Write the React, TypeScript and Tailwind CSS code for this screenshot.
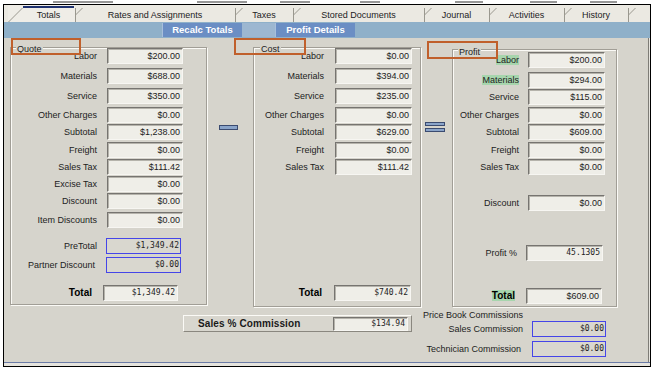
import React from "react";

type Kind = "n" | "m" | "b";
type Row = {
  label: string;
  value: string;
  mt: string;
  kind?: Kind;
  bold?: boolean;
  hl?: boolean;
  f?: string;
  lp?: string;
};

const quoteRows: Row[] = [
  { label: "Labor", value: "$200.00", mt: "mt-0" },
  { label: "Materials", value: "$688.00", mt: "mt-[4px]" },
  { label: "Service", value: "$350.00", mt: "mt-[4px]" },
  { label: "Other Charges", value: "$0.00", mt: "mt-[3px]" },
  { label: "Subtotal", value: "$1,238.00", mt: "mt-[1px]" },
  { label: "Freight", value: "$0.00", mt: "mt-[2px]" },
  { label: "Sales Tax", value: "$111.42", mt: "mt-[1px]" },
  { label: "Excise Tax", value: "$0.00", mt: "mt-[1px]" },
  { label: "Discount", value: "$0.00", mt: "mt-[1px]" },
  { label: "Item Discounts", value: "$0.00", mt: "mt-[3px]" },
  { label: "PreTotal", value: "$1,349.42", mt: "mt-[10px]", kind: "b", f: "ml-[9px] w-[75px]" },
  { label: "Partner Discount", value: "$0.00", mt: "mt-[3px]", kind: "b", f: "ml-[9px] w-[75px]", lp: "pr-[2px]" },
  { label: "Total", value: "$1,349.42", mt: "mt-[12px]", kind: "m", bold: true, f: "ml-[6px] w-[75px]", lp: "pr-[5px]" },
];

const costRows: Row[] = [
  { label: "Labor", value: "$0.00", mt: "mt-0" },
  { label: "Materials", value: "$394.00", mt: "mt-[4px]" },
  { label: "Service", value: "$235.00", mt: "mt-[4px]" },
  { label: "Other Charges", value: "$0.00", mt: "mt-[3px]" },
  { label: "Subtotal", value: "$629.00", mt: "mt-[1px]" },
  { label: "Freight", value: "$0.00", mt: "mt-[2px]" },
  { label: "Sales Tax", value: "$111.42", mt: "mt-[1px]" },
  { label: "Total", value: "$740.42", mt: "mt-[110px]", kind: "m", bold: true, f: "ml-[10px] w-[77px]", lp: "pr-[2px]" },
];

const profitRows: Row[] = [
  { label: "Labor", value: "$200.00", mt: "mt-[2px]", hl: true },
  { label: "Materials", value: "$294.00", mt: "mt-[4px]", hl: true },
  { label: "Service", value: "$115.00", mt: "mt-[1px]" },
  { label: "Other Charges", value: "$0.00", mt: "mt-[2px]" },
  { label: "Subtotal", value: "$609.00", mt: "mt-[1px]" },
  { label: "Freight", value: "$0.00", mt: "mt-[2px]" },
  { label: "Sales Tax", value: "$0.00", mt: "mt-[1px]" },
  { label: "Discount", value: "$0.00", mt: "mt-[20px]" },
  { label: "Profit %", value: "45.1305", mt: "mt-[34px]", kind: "m", f: "ml-[7px] w-[77px]", lp: "pr-[2px]" },
  { label: "Total", value: "$609.00", mt: "mt-[27px]", bold: true, hl: true, f: "ml-[7px] w-[76px]", lp: "pr-[4px]" },
];

const sunken =
  "border border-t-[#767470] border-l-[#767470] border-r-[#f7f6f2] border-b-[#f7f6f2] shadow-[inset_1px_1px_0_#b5b3ab] bg-[#efeee8]";

function Field({ value, kind = "n", cls = "ml-[10px] w-[76px]" }: { value: string; kind?: Kind; cls?: string }) {
  if (kind === "b") {
    return (
      <div
        className={`${cls} h-[16px] border border-[#4545e8] bg-[#d9d7cf] flex items-center justify-end pr-[1px] font-['DejaVu_Sans_Mono',monospace] text-[8px] leading-none text-[#222]`}
      >
        {value}
      </div>
    );
  }
  if (kind === "m") {
    return (
      <div
        className={`${cls} h-[16px] ${sunken} flex items-center justify-end pr-[2px] font-['DejaVu_Sans_Mono',monospace] text-[8px] leading-none text-[#222]`}
      >
        {value}
      </div>
    );
  }
  return (
    <div className={`${cls} h-[16px] ${sunken} flex items-center justify-end pr-[2px] text-[9px] leading-none text-[#1c1c1c]`}>
      {value}
    </div>
  );
}

function Rows({ rows, lw, f }: { rows: Row[]; lw: string; f: string }) {
  return (
    <>
      {rows.map((r) => (
        <div key={r.label + r.value} className={`flex items-center h-[16px] shrink-0 ${r.mt}`}>
          <div
            className={`${lw} shrink-0 text-right leading-none ${r.lp ?? ""} ${
              r.bold ? "font-bold text-[10px] text-black" : "text-[9px] text-[#222]"
            }`}
          >
            <span className={r.hl ? "bg-[#a7d5ad]" : ""}>{r.label}</span>
          </div>
          <Field value={r.value} kind={r.kind} cls={r.f ?? f} />
        </div>
      ))}
    </>
  );
}

const groupBox =
  "relative border border-[#a19e96] shadow-[1px_1px_0_#fbfaf6,inset_1px_1px_0_#fbfaf6] flex flex-col";

function Legend({ text, cls }: { text: string; cls: string }) {
  return (
    <div className={`absolute ${cls} bg-[#d6d4cc] px-[1px] text-[9px] leading-[10px] text-[#222]`}>{text}</div>
  );
}

const tabs = [
  { label: "Totals", w: "w-[67px]", sel: true },
  { label: "Rates and Assignments", w: "w-[160px]" },
  { label: "Taxes", w: "w-[58px]" },
  { label: "Stored Documents", w: "w-[131px]" },
  { label: "Journal", w: "w-[65px]" },
  { label: "Activities", w: "w-[75px]" },
  { label: "History", w: "w-[64px]" },
];

function Tabs() {
  return (
    <div className="h-[17px] shrink-0 bg-[#ebe9e2] flex pl-[4px]">
      {tabs.map((t) => (
        <div
          key={t.label}
          className={`${t.w} relative h-full flex items-center justify-center pt-[3px] text-[9px] leading-none text-[#222] ${
            t.sel ? "pl-[14px] bg-[#efede7]" : ""
          }`}
        >
          {t.sel ? (
            <svg className="absolute left-0 top-0" width="67" height="17" viewBox="0 0 67 17">
              <path d="M0.5 17 L14.5 3" stroke="#9a988f" strokeWidth="1" fill="none" />
              <path d="M15 2 H66" stroke="#1f3270" strokeWidth="2" fill="none" />
            </svg>
          ) : (
            <svg className="absolute left-0 top-0" width="10" height="17" viewBox="0 0 10 17">
              <path d="M0.5 3 V17 M0.5 10 L7.5 3" stroke="#9a988f" strokeWidth="1" fill="none" />
            </svg>
          )}
          {t.label}
        </div>
      ))}
      <div className="flex-1 relative">
        <svg className="absolute left-0 top-0" width="10" height="17" viewBox="0 0 10 17">
          <path d="M0.5 3 V17 M0.5 10 L7.5 3" stroke="#9a988f" strokeWidth="1" fill="none" />
        </svg>
      </div>
    </div>
  );
}

function BlueBar() {
  return (
    <div className="h-[16px] shrink-0 bg-[#8fb0c9] flex pl-[158px] py-[1px]">
      <div className="w-[80px] bg-[#6b8ec4] border-l border-[#a8bfdc] flex items-center justify-center text-white font-bold text-[9.5px] leading-none">
        Recalc Totals
      </div>
      <div className="w-[33px] bg-[#9db7d1]" />
      <div className="w-[80px] bg-[#6b8ec4] border-l border-[#a8bfdc] flex items-center justify-center text-white font-bold text-[9.5px] leading-none">
        Profit Details
      </div>
    </div>
  );
}

function Main() {
  return (
    <div className="h-[324px] w-[645px] shrink-0 bg-[#d6d4cc] border-r border-[#7e7c76] flex flex-col">
      <div className="mt-[9px] h-[260px] shrink-0 flex items-start pl-[6px]">
        {/* Quote */}
        <div className={`${groupBox} w-[197px] h-[258px]`}>
          <Legend text="Quote" cls="left-[5px] top-[-4px]" />
          <Rows rows={quoteRows} lw="w-[86px]" f="ml-[10px] w-[76px]" />
        </div>
        {/* minus */}
        <div className="w-[46px] shrink-0">
          <div className="ml-[12px] mt-[78px] w-[19px] h-[5px] bg-[#8aa4c9] border border-[#3b4b70]" />
        </div>
        {/* Cost */}
        <div className={`${groupBox} w-[168px] h-[260px]`}>
          <Legend text="Cost" cls="left-[6px] top-[-4px]" />
          <Rows rows={costRows} lw="w-[70px]" f="ml-[11px] w-[77px]" />
        </div>
        {/* equals */}
        <div className="w-[31px] shrink-0 flex flex-col gap-[2px] pl-[4px] pt-[75px]">
          <div className="w-[20px] h-[4px] bg-[#8aa4c9] border border-[#3b4b70]" />
          <div className="w-[20px] h-[4px] bg-[#8aa4c9] border border-[#3b4b70]" />
        </div>
        {/* Profit */}
        <div className={`${groupBox} mt-[2px] w-[165px] h-[258px]`}>
          <Legend text="Profit" cls="left-[5px] top-[-3px]" />
          <Rows rows={profitRows} lw="w-[66px]" f="ml-[9px] w-[77px]" />
        </div>
      </div>

      <div className="flex items-start">
        <div className="ml-[179px] mt-[8px] w-[229px] h-[17px] shrink-0 bg-[#d8d6ce] border border-t-[#fbfaf6] border-l-[#fbfaf6] border-r-[#8a877f] border-b-[#8a877f] flex items-center justify-between pr-[3px]">
          <span className="pl-[14px] font-bold text-[10px] leading-none text-[#1a1a1a] tracking-[0.1px]">
            Sales % Commission
          </span>
          <div
            className={`w-[75px] h-[14px] ${sunken} flex items-center justify-end pr-[2px] font-['DejaVu_Sans_Mono',monospace] text-[8px] leading-none text-[#222]`}
          >
            $134.94
          </div>
        </div>
        <div className="ml-[11px] mt-[3px] flex flex-col">
          <div className="h-[11px] text-[9px] leading-[11px] text-[#222]">Price Book Commissions</div>
          <div className="flex items-center h-[16px]">
            <div className="w-[100px] text-right text-[9px] leading-none text-[#222]">Sales Commission</div>
            <Field value="$0.00" kind="b" cls="ml-[9px] w-[74px]" />
          </div>
          <div className="flex items-center h-[16px] mt-[4px]">
            <div className="w-[98px] text-right text-[9px] leading-none text-[#222]">Technician Commission</div>
            <Field value="$0.00" kind="b" cls="ml-[11px] w-[74px]" />
          </div>
        </div>
      </div>
    </div>
  );
}

const frags = [
  "ml-[53px] w-[60px]",
  "ml-[84px] w-[50px]",
  "ml-[33px] w-[30px]",
  "ml-[50px] w-[20px]",
  "ml-[75px] w-[28px]",
  "ml-[47px] w-[27px]",
  "ml-[33px] w-[27px]",
];

export default function App() {
  return (
    <div className="relative w-[656px] h-[372px] bg-white overflow-hidden font-['Liberation_Sans',Arial,sans-serif] text-[#1e1e1e]">
      <div className="h-[4px] flex items-end pb-[1px]">
        {frags.map((c) => (
          <div key={c} className={`${c} h-[2px] bg-[#6a6a6a] opacity-70`} />
        ))}
      </div>
      <div className="ml-[3px] w-[648px] h-[363px] border border-black bg-[#e6e4de] flex flex-col">
        <Tabs />
        <BlueBar />
        <Main />
        <div className="h-[1px] shrink-0 bg-[#6b7ba6]" />
        <div className="h-[3px] shrink-0 bg-[#e6e4de]" />
      </div>

      {/* annotation boxes */}
      <div className="absolute left-[11px] top-[38px] w-[70px] h-[17px] border-2 border-[#c0602c]" />
      <div className="absolute left-[234px] top-[38px] w-[72px] h-[17px] border-2 border-[#c0602c]" />
      <div className="absolute left-[427px] top-[41px] w-[71px] h-[18px] border-2 border-[#c0602c]" />
    </div>
  );
}
